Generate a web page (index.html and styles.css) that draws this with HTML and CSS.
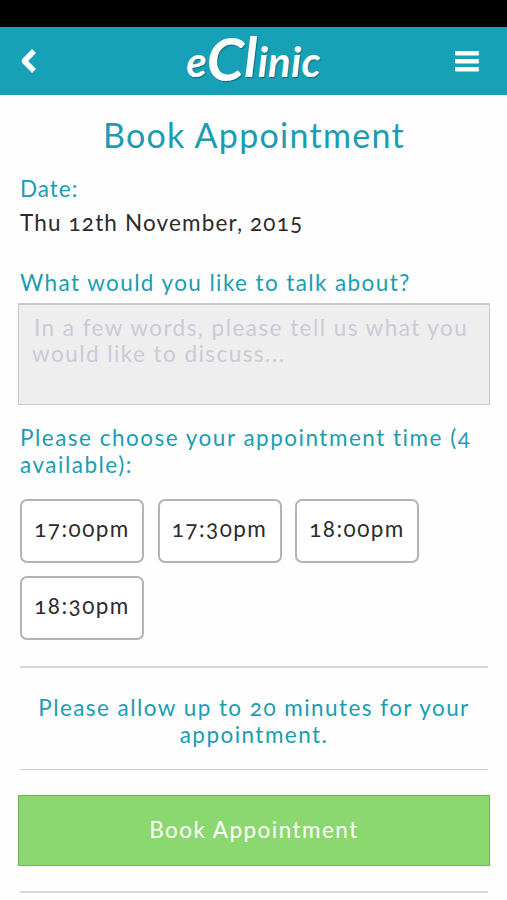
FILE: index.html
```html
<!DOCTYPE html>
<html lang="en">
<head>
    <meta charset="UTF-8">
    <meta name="viewport" content="width=device-width, initial-scale=1.0">
    <title>eClinic - Book Appointment</title>
    <link rel="stylesheet" href="styles.css">
</head>
<body>
    <div class="status-bar"></div>

    <header class="header">
        <button class="icon-btn back-btn" aria-label="Back">
            <svg width="17" height="26" viewBox="0 0 17 26"><path d="M14 3 4.3 13 14 23" fill="none" stroke="#fff" stroke-width="5.5" stroke-linejoin="round"/></svg>
        </button>
        <div class="logo">e<span class="logo-cap">C</span><span class="logo-tall">l</span>inic</div>
        <button class="icon-btn" aria-label="Menu">
            <svg width="24" height="21" viewBox="0 0 24 21" fill="#fff"><rect width="24" height="4.4" rx="1"/><rect y="8" width="24" height="4.4" rx="1"/><rect y="16" width="24" height="4.4" rx="1"/></svg>
        </button>
    </header>

    <main class="content">
        <h1 class="title">Book Appointment</h1>

        <p class="label date-label">Date:</p>
        <p class="date-value">Thu 12th November, 2015</p>

        <label class="label topic-label" for="topic">What would you like to talk about?</label>
        <textarea class="topic" id="topic" placeholder="In a few words, please tell us what you would like to discuss..."></textarea>

        <p class="label time-label">Please choose your appointment time (4 available):</p>
        <div class="slots">
            <button class="slot">17:00pm</button>
            <button class="slot">17:30pm</button>
            <button class="slot">18:00pm</button>
            <button class="slot">18:30pm</button>
        </div>

        <p class="note">Please allow up to 20 minutes for your appointment.</p>

        <button class="book-btn">Book Appointment</button>
        <hr class="divider">
    </main>
</body>
</html>
```
FILE: styles.css
```css
* {
    box-sizing: border-box;
}
body {
    margin: 0;
    height: 900px;
    overflow: hidden;
    background: #fefefe;
    color: #2b2b2b;
    font-family: Lato, "Open Sans", sans-serif;
    font-size: 22.5px;
    line-height: 27px;
    letter-spacing: 1.45px;
    font-variant-numeric: oldstyle-nums;
}
p, h1 {
    margin: 0;
}
button, textarea {
    font: inherit;
    letter-spacing: inherit;
    font-variant-numeric: inherit;
}
.status-bar {
    height: 27px;
    background: #000;
}
.header {
    display: flex;
    justify-content: space-between;
    align-items: center;
    height: 68px;
    padding: 0 28px 0 20px;
    background: #17a1b7;
}
.icon-btn {
    display: flex;
    padding: 0;
    border: none;
    background: none;
}
.back-btn {
    width: 32px;
}
.logo {
    height: 68px;
    color: #fff;
    font-size: 42px;
    font-weight: 700;
    font-style: italic;
    line-height: 68px;
    letter-spacing: 0.2px;
    text-shadow: 1px 1px 1px rgba(0, 60, 75, 0.5);
}
.logo-cap {
    font-size: 60px;
    line-height: 0;
    vertical-align: -4px;
}
.logo-tall {
    font-size: 55px;
    line-height: 0;
}
.content {
    padding: 0 17px 0 18px;
}
.title {
    padding-top: 20px;
    color: #1a9db2;
    font-size: 34px;
    font-weight: 400;
    line-height: 40px;
    letter-spacing: 1.3px;
    text-align: center;
}
.label {
    display: block;
    padding: 0 2px;
    color: #1a9db2;
}
.date-label {
    margin-top: 20px;
    letter-spacing: 1px;
}
.date-value {
    margin-top: 7px;
    padding: 0 2px;
    letter-spacing: 1.15px;
}
.topic-label {
    margin-top: 33px;
    letter-spacing: 1.4px;
}
.topic {
    display: block;
    width: 472px;
    height: 102px;
    margin-top: 7px;
    padding: 10px 12px 10px 13px;
    border: 1px solid #c8cacb;
    border-top-width: 2px;
    border-radius: 0;
    background: #eee;
    line-height: 26px;
    resize: none;
}
.topic::placeholder {
    color: #cccad6;
    text-indent: 2px;
}
.time-label {
    margin-top: 19px;
    letter-spacing: 1.5px;
}
.slots {
    display: flex;
    flex-wrap: wrap;
    gap: 13.5px;
    margin-top: 21px;
    padding: 0 2px;
}
.slot {
    width: 124px;
    height: 63.5px;
    padding: 0 0 5px;
    border: 2px solid #b3b3b3;
    border-radius: 7px;
    background: #fff;
    color: #2b2b2b;
}
.note {
    margin: 26px 2px 25px;
    padding: 26px 0 21px;
    border-top: 2px solid #d6d7de;
    border-bottom: 1px solid #cfcde0;
    color: #1a9db2;
    text-align: center;
}
.book-btn {
    display: block;
    width: 472px;
    height: 71px;
    padding-bottom: 3px;
    border: 1px solid #6fb257;
    background: #8bd870;
    color: #fff;
}
.divider {
    margin: 25px 2px 0;
    border: none;
    border-top: 2px solid #d8d9dc;
}
```
